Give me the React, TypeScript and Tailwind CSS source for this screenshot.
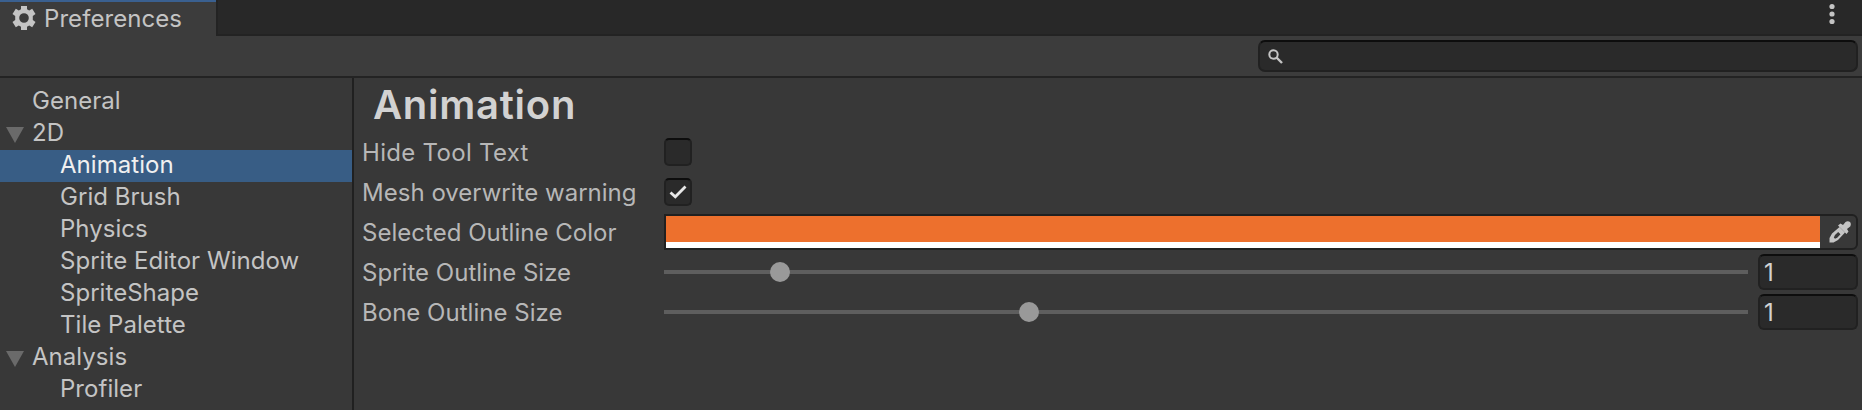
import React from "react";

const tree: { label: string; depth: number; open?: boolean; selected?: boolean }[] = [
  { label: "General", depth: 0 },
  { label: "2D", depth: 0, open: true },
  { label: "Animation", depth: 1, selected: true },
  { label: "Grid Brush", depth: 1 },
  { label: "Physics", depth: 1 },
  { label: "Sprite Editor Window", depth: 1 },
  { label: "SpriteShape", depth: 1 },
  { label: "Tile Palette", depth: 1 },
  { label: "Analysis", depth: 0, open: true },
  { label: "Profiler", depth: 1 },
];

function Gear() {
  return (
    <svg className="mb-0.5" width="24" height="24" viewBox="0 0 24 24" fill="#c4c4c4" fillRule="evenodd">
      <path d="M9 0h6v3.200l2.200 1.200 3-1.700 3.300 5.400-2.700 1.900v4l2.700 1.900-3.300 5.400-3-1.700-2.200 1.200V24H9v-3.200l-2.200-1.200-3 1.700L.5 15.900l2.700-1.900v-4L.5 8.100l3.300-5.400 3 1.700L9 3.200zM12 7.200a4.800 4.800 0 1 0 0 9.600a4.800 4.800 0 1 0 0-9.600z" />
    </svg>
  );
}

function Slider({ position, value }: { position: number; value: string }) {
  return (
    <div className="flex h-10 items-center">
      <div className="relative h-1 w-[1084px] bg-[#5e5e5e]">
        <span className="absolute -top-2 size-5 rounded-full bg-[#999999]" style={{ left: position }} />
      </div>
      <div className="ml-[10px] flex h-9 w-[100px] items-center rounded-[6px] border-2 border-[#212121] border-t-[#0d0d0d] bg-[#2a2a2a] pt-0.5 pl-1 text-[24px] text-[#d2d2d2]">
        {value}
      </div>
    </div>
  );
}

function Checkbox({ checked }: { checked?: boolean }) {
  return (
    <div className="flex h-10 items-center">
      <div className="flex size-7 items-center justify-center rounded-[5px] border-2 border-[#212121] border-t-[#0d0d0d] bg-[#2a2a2a]">
        {checked && (
          <svg width="18" height="14" viewBox="0 0 18 14" fill="none" stroke="#e8e8e8" strokeWidth="2.800">
            <path d="M1.500 7.500 6.300 11.800 16.500 1.500" />
          </svg>
        )}
      </div>
    </div>
  );
}

function Row({ label, wide, children }: { label: string; wide?: boolean; children: React.ReactNode }) {
  return (
    <div className="flex h-10 items-center">
      <div className={`w-[302px] shrink-0 whitespace-pre pt-0.5 text-[24px] text-[#b7b7b7] ${wide ? "tracking-[0.3px]" : "tracking-[0.02px]"}`}>
        {label}
      </div>
      {children}
    </div>
  );
}

export default function App() {
  return (
    <div className="flex h-[410px] w-[1862px] flex-col overflow-hidden bg-[#383838] font-['Inter',sans-serif] leading-8">
      <div className="flex h-9 shrink-0 bg-[#3c3c3c]">
        <div className="flex w-[216px] items-center border-t-2 border-[#3a6090] pl-3">
          <Gear />
          <span className="mb-px ml-2 text-[24px] tracking-[0.06px] text-[#c4c4c4]">Preferences</span>
        </div>
        <div className="flex flex-1 justify-end border-b-2 border-l-2 border-[#232323] bg-[#282828] pr-[27px]">
          <svg className="mt-[3px]" width="6" height="22" fill="#c4c4c4">
            <circle cx="3" cy="3.500" r="2.600" />
            <circle cx="3" cy="11" r="2.600" />
            <circle cx="3" cy="18.500" r="2.600" />
          </svg>
        </div>
      </div>
      <div className="flex h-[42px] shrink-0 justify-end border-b-2 border-[#232323] bg-[#3c3c3c] pt-1 pr-1">
        <div className="flex h-8 w-[600px] items-center rounded-[7px] border-2 border-[#212121] border-t-[#0d0d0d] bg-[#2a2a2a] pl-2">
          <svg width="15" height="15" viewBox="0 0 15 15" fill="none" stroke="#c4c4c4" strokeWidth="2">
            <circle cx="5.500" cy="5.500" r="4.200" />
            <path d="m8.500 8.500 5.500 5.500" strokeWidth="2.400" />
          </svg>
        </div>
      </div>
      <div className="flex flex-1">
        <nav className="w-[354px] shrink-0 border-r-2 border-[#202020] pt-2">
          {tree.map((item) => (
            <div
              key={item.label}
              className={`flex h-8 items-center whitespace-pre text-[24px] tracking-[0.04px] ${item.selected ? "bg-[#385d85] text-[#f0f0f0]" : "text-[#c4c4c4]"}`}
            >
              <span className={`flex shrink-0 ${item.depth ? "w-[60px]" : "w-8"}`}>
                {item.open && (
                  <svg className="mt-[2px] ml-[6px]" width="18" height="16" fill="#6a6a6a">
                    <path d="M0 0h18L9 16z" />
                  </svg>
                )}
              </span>
              <span className="pb-0.5">{item.label}</span>
            </div>
          ))}
        </nav>
        <main className="flex-1 pl-2">
          <h1 className="ml-[11px] flex h-[54px] items-center pb-px text-[40px] font-semibold tracking-[0.74px] text-[#d2d2d2]">Animation</h1>
          <Row label="Hide Tool Text" wide><Checkbox /></Row>
          <Row label="Mesh overwrite warning"><Checkbox checked /></Row>
          <Row label="Selected Outline Color">
            <div className="flex h-9 w-[1194px] overflow-hidden rounded-r-[6px] border-2 border-[#202020]">
              <div className="w-[1154px] border-b-[6px] border-white bg-[#ed702d]" />
              <div className="flex flex-1 items-center justify-end pr-[5px]">
                <svg width="22" height="22" viewBox="0 0 22 22" fill="#c4c4c4">
                  <path fillRule="evenodd" d="M.5 21.500V17l2.500-4.500 7.500-6.500 5.500 5.500-7 7.500L4.500 21.500zM6 14l-1.200 2.500L6 17.800 8.200 16.800l3.300-3.600-2.300-2.200z" />
                  <path d="M9 4.500 11.500 2.500 14 4l2.500-3C18 0 20 .3 21 1c1 1 1.200 3 .2 4.500L18 8l1.500 2.500L17.500 13z" />
                </svg>
              </div>
            </div>
          </Row>
          <Row label="Sprite Outline Size"><Slider position={106} value="1" /></Row>
          <Row label="Bone Outline Size"><Slider position={355} value="1" /></Row>
        </main>
      </div>
    </div>
  );
}
